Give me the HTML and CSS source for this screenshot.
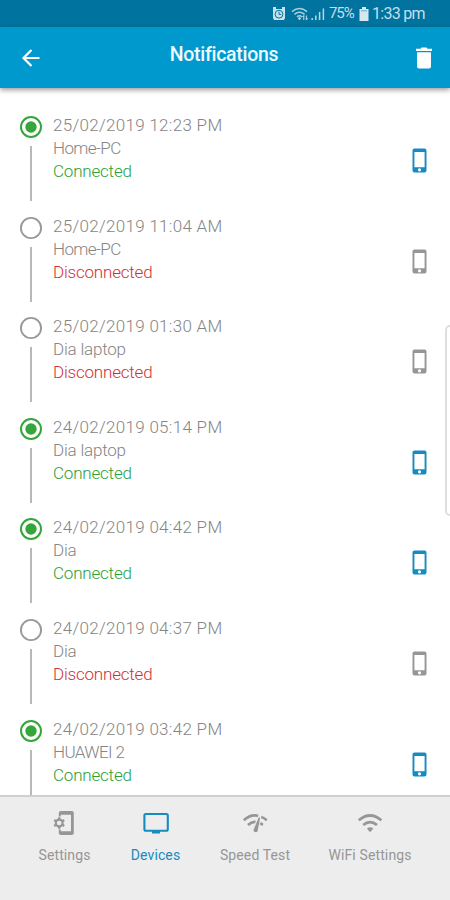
FILE: index.html
```html
<!DOCTYPE html>
<html lang="en">
<head>
<meta charset="utf-8">
<title>Notifications</title>
<link rel="stylesheet" href="styles.css">
</head>
<body>
<svg class="defs" aria-hidden="true">
  <symbol id="phone" viewBox="0 0 15 25"><path fill="currentColor" fill-rule="evenodd" d="M2.5.5h10a2 2 0 0 1 2 2v20a2 2 0 0 1-2 2h-10a2 2 0 0 1-2-2v-20a2 2 0 0 1 2-2zM2.4 4v15.2h10.2V4zM7.5 20.2a1.6 1.6 0 1 0 0 3.2 1.6 1.6 0 0 0 0-3.2z"/></symbol>
  <symbol id="on" viewBox="0 0 24 24"><circle cx="12" cy="12" r="10" fill="none" stroke="#34a63b" stroke-width="2"/><circle cx="12" cy="12" r="5.7" fill="#34a63b"/></symbol>
  <symbol id="off" viewBox="0 0 24 24"><circle cx="12" cy="12" r="10.1" fill="none" stroke="#999" stroke-width="1.9"/></symbol>
</svg>
<div class="screen">
  <div class="status">
    <svg class="alarm" viewBox="0 0 14 14"><path d="M1 1h3M10 1h3" stroke="#c9e1eb" stroke-width="2"/><path d="M1 2h12v9l-1 2H2l-1-2z" fill="#c9e1eb"/><circle cx="7" cy="7.2" r="3.9" fill="none" stroke="#00739e" stroke-width="1"/><path d="M7 4.8v2.6h2.2" fill="none" stroke="#00739e"/></svg>
    <svg class="wifi-small" viewBox="0 0 18 14"><g fill="none" stroke="#a9cfde" stroke-width="1.5"><path d="M1 4.6q7.5-6 15 0M3.4 7.3q5.1-4.2 10.2 0M6 9.8q2.5-2 5 0"/></g><circle cx="8.5" cy="11.5" r="1.3" fill="#c9e1eb"/><path d="M12.8 13V8.5l-1.4 1.7M15.3 8.5V13l1.4-1.7" fill="none" stroke="#c9e1eb"/></svg>
    <svg class="signal" viewBox="0 0 14 14"><path d="M1.2 11v2M4.8 8.5V13M8.6 5V13M12.4 1.5V13" stroke="#b5d6e3" stroke-width="1.5"/></svg>
    <span class="percent">75%</span>
    <svg class="battery" viewBox="0 0 10 14"><path d="M3 0h4v2h2.5v12H.5V2H3z" fill="#d5e8ef"/><path d="M2 3.8h6" stroke="#6faac2"/></svg>
    <span class="clock">1:33 pm</span>
  </div>
  <header class="bar">
    <svg class="back" viewBox="0 0 20 20"><path d="M18.5 10H2.5M10.5 2L2.5 10l8 8" fill="none" stroke="#fff" stroke-width="2.2"/></svg>
    <h1>Notifications</h1>
    <svg class="trash" viewBox="0 0 18 22"><path d="M1 1.8h4.5L6.5.5h5l1 1.3H17V4H1zM2 5.3h14V19.5a2 2 0 0 1-2 2H4a2 2 0 0 1-2-2z" fill="#fff"/></svg>
  </header>
  <main class="list">
    <article class="row"><div class="rail"><svg><use href="#on"/></svg><i></i></div><div class="info"><p class="date">25/02/2019 12:23 PM</p><p class="host">Home-PC</p><p class="ok">Connected</p></div><svg class="phone active"><use href="#phone"/></svg></article>
    <article class="row"><div class="rail"><svg><use href="#off"/></svg><i></i></div><div class="info"><p class="date">25/02/2019 11:04 AM</p><p class="host">Home-PC</p><p class="bad">Disconnected</p></div><svg class="phone"><use href="#phone"/></svg></article>
    <article class="row"><div class="rail"><svg><use href="#off"/></svg><i></i></div><div class="info"><p class="date">25/02/2019 01:30 AM</p><p>Dia laptop</p><p class="bad">Disconnected</p></div><svg class="phone"><use href="#phone"/></svg></article>
    <article class="row"><div class="rail"><svg><use href="#on"/></svg><i></i></div><div class="info"><p class="date">24/02/2019 05:14 PM</p><p>Dia laptop</p><p class="ok">Connected</p></div><svg class="phone active"><use href="#phone"/></svg></article>
    <article class="row"><div class="rail"><svg><use href="#on"/></svg><i></i></div><div class="info"><p class="date">24/02/2019 04:42 PM</p><p>Dia</p><p class="ok">Connected</p></div><svg class="phone active"><use href="#phone"/></svg></article>
    <article class="row"><div class="rail"><svg><use href="#off"/></svg><i></i></div><div class="info"><p class="date">24/02/2019 04:37 PM</p><p>Dia</p><p class="bad">Disconnected</p></div><svg class="phone"><use href="#phone"/></svg></article>
    <article class="row"><div class="rail"><svg><use href="#on"/></svg><i></i></div><div class="info"><p class="date">24/02/2019 03:42 PM</p><p class="host">HUAWEI 2</p><p class="ok">Connected</p></div><svg class="phone active"><use href="#phone"/></svg></article>
  </main>
  <nav class="tabs">
    <a class="tab"><svg viewBox="0 0 28 28"><path d="M7.8 7.4V4a2 2 0 0 1 2-2h11a2 2 0 0 1 2 2v20a2 2 0 0 1-2 2h-11a2 2 0 0 1-2-2v-3.4h2v1.6H20V5.8H9.8v1.6z" fill="currentColor"/><circle cx="8.2" cy="14" r="3.4" fill="none" stroke="currentColor" stroke-width="2.1"/><path d="M8.2 8.3v2M8.2 17.7v2M3.2 11.1l1.8 1.1M11.4 15.8l1.8 1.1M3.2 16.9l1.8-1.1M11.4 12.2l1.8-1.1" stroke="currentColor" stroke-width="2.4"/></svg><span>Settings</span></a>
    <a class="tab current"><svg viewBox="0 0 28 28"><rect x="2.4" y="5" width="23.4" height="16.8" rx="1.5" fill="none" stroke="currentColor" stroke-width="2.1"/><path d="M10 21.5h8v3h-8z" fill="currentColor"/></svg><span>Devices</span></a>
    <a class="tab"><svg viewBox="0 0 28 28"><g fill="none" stroke="currentColor" stroke-width="2.6"><path d="M2.8 11.3Q9.5 5 17.2 6.8M20.2 7.9q3 1.2 5.6 3.4M7 16q3.8-3.6 7.5-3.1M19.3 13.9l2.5 2.1"/></g><path d="M17.8 8.2l1.3.5-2.5 13.2a2.1 2.1 0 0 1-4-1.1z" fill="currentColor"/></svg><span>Speed Test</span></a>
    <a class="tab"><svg viewBox="0 0 28 28"><g fill="none" stroke="currentColor" stroke-width="2.7"><path d="M2.8 11.3q11.2-9.6 22.6 0M7.2 16q6.8-5.9 13.8 0"/></g><path d="M10.9 19.6q3.2-2.6 6.4 0l-3.2 3.6z" fill="currentColor"/></svg><span>WiFi Settings</span></a>
  </nav>
  <div class="edge"></div>
</div>
</body>
</html>
```
FILE: styles.css
```css
* { box-sizing: border-box; }
body { margin: 0; background: #fff; font-family: Roboto, "Liberation Sans", sans-serif; }
h1, p { margin: 0; }
svg { display: block; flex: none; }
.defs { position: absolute; width: 0; height: 0; }
.screen {
  position: relative;
  display: flex;
  flex-direction: column;
  width: 450px;
  height: 900px;
  overflow: hidden;
}
.status {
  display: flex;
  align-items: center;
  flex: none;
  height: 27px;
  padding-left: 272px;
  background: #00739e;
  color: #c4dfe9;
  font-size: 16px;
  line-height: 27px;
}
.alarm { width: 14px; height: 14px; }
.wifi-small { width: 18px; height: 14px; margin-left: 5px; }
.signal { width: 14px; height: 14px; margin-left: 2px; }
.percent { width: 26px; margin-left: 4px; font-size: 15px; letter-spacing: -1.1px; white-space: nowrap; }
.battery { width: 10px; height: 14px; margin-left: 4px; }
.clock { margin-left: 3px; letter-spacing: -0.7px; white-space: nowrap; }
.bar {
  position: relative;
  display: flex;
  align-items: center;
  flex: none;
  height: 61px;
  padding: 0 17px 0 21px;
  background: #0099ce;
  box-shadow: 0 2px 5px rgba(0, 0, 0, .4);
}
.back { width: 20px; height: 20px; }
.trash { width: 18px; height: 22px; }
.bar h1 {
  flex: 1;
  padding: 0 8px 5px 0;
  color: #eef9ff;
  font-size: 19.5px;
  font-weight: 500;
  line-height: 24px;
  letter-spacing: -.3px;
  text-align: center;
}
.list { flex: 1; min-height: 0; padding-top: 26px; overflow: hidden; }
.row {
  display: flex;
  height: 100.6px;
  padding: 0 23px 0 19px;
}
.rail {
  display: flex;
  flex-direction: column;
  align-items: center;
  width: 24px;
  padding-top: 1px;
}
.rail svg { width: 24px; height: 24px; }
.rail i { width: 2px; height: 55px; margin-top: 7px; background: #b8b8b8; }
.info {
  flex: 1;
  padding-left: 10px;
  color: #858585;
  font-size: 17px;
  font-weight: 300;
  line-height: 23px;
  letter-spacing: -.2px;
}
.info .date { letter-spacing: .3px; }
.info .host { letter-spacing: -.6px; }
.info .ok { color: #2da137; }
.info .bad { color: #d03035; }
.phone { width: 15px; height: 25px; margin-top: 34px; color: #969696; }
.phone.active { color: #168bc0; }
.tabs {
  display: grid;
  grid-template-columns: 91px 91px 108px 122px;
  flex: none;
  align-items: start;
  height: 105px;
  padding: 12px 19px;
  border-top: 2px solid #d0d0d0;
  background: #ededed;
}
.tab {
  display: flex;
  flex-direction: column;
  align-items: center;
  color: #969696;
  font-size: 14px;
  line-height: 20px;
  letter-spacing: .12px;
  white-space: nowrap;
}
.tab svg { width: 28px; height: 28px; }
.tab span { margin-top: 8px; }
.tab.current { color: #168bc0; }
.edge {
  position: absolute;
  top: 325px;
  right: -6px;
  width: 11px;
  height: 191px;
  border: 2px solid #dedede;
  border-radius: 5px;
}
```
